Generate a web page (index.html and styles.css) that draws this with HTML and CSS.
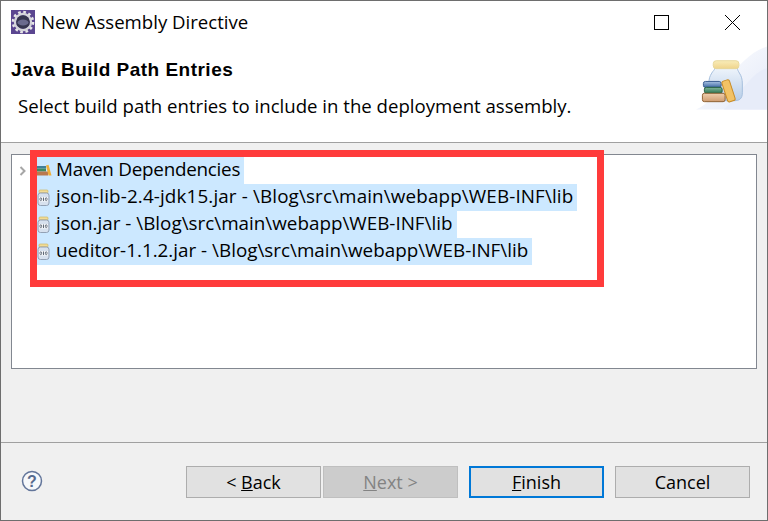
FILE: index.html
```html
<!DOCTYPE html>
<html lang="en">
<head>
<meta charset="utf-8">
<title>New Assembly Directive</title>
<link rel="stylesheet" href="styles.css">
</head>
<body>
<div class="window">
  <div class="top">
    <div class="titlebar">
      <svg class="app-icon" viewBox="0 0 24 24" aria-hidden="true">
        <rect width="24" height="24" fill="#5b4690"/>
        <circle cx="12" cy="12" r="9.800" fill="none" stroke="#e6e6e8" stroke-width="3" stroke-dasharray="2.600 2.530"/>
        <circle cx="12" cy="12" r="8" fill="none" stroke="#d4d4da" stroke-width="2.400"/>
        <circle cx="12" cy="12" r="6.800" fill="#35354f"/>
        <ellipse cx="12" cy="12.500" rx="5.500" ry="3" fill="#6a6a8e"/>
      </svg>
      <span class="title">New Assembly Directive</span>
      <span class="spacer"></span>
      <svg class="win-btn win-max" viewBox="0 0 15 15" aria-hidden="true"><rect x="0.5" y="0.5" width="14" height="14" fill="none" stroke="#000"/></svg>
      <svg class="win-btn win-close" viewBox="0 0 15 15" aria-hidden="true"><path d="M0 0L15 15M15 0L0 15" stroke="#000" fill="none"/></svg>
    </div>
    <div class="banner">
      <div class="banner-text">
        <h1 class="heading">Java Build Path Entries</h1>
        <p class="desc">Select build path entries to include in the deployment assembly.</p>
      </div>
      <svg class="banner-art" viewBox="0 0 72 64" aria-hidden="true">
        <defs>
          <linearGradient id="bg" x1="0" y1="0" x2="1" y2="1"><stop offset="0" stop-color="#ffffff"/><stop offset="1" stop-color="#e3e9f8"/></linearGradient>
          <linearGradient id="jar" x1="0" y1="0" x2="0" y2="1"><stop offset="0" stop-color="#eef4fb"/><stop offset="1" stop-color="#b7cde8"/></linearGradient>
          <linearGradient id="lid" x1="0" y1="0" x2="0" y2="1"><stop offset="0" stop-color="#f9ecb8"/><stop offset="1" stop-color="#efd48c"/></linearGradient>
          <linearGradient id="tan" x1="0" y1="0" x2="0" y2="1"><stop offset="0" stop-color="#efcfae"/><stop offset="1" stop-color="#cf9c70"/></linearGradient>
          <linearGradient id="blue" x1="0" y1="0" x2="0" y2="1"><stop offset="0" stop-color="#a9c2e2"/><stop offset="1" stop-color="#3f6aa5"/></linearGradient>
          <linearGradient id="green" x1="0" y1="0" x2="0" y2="1"><stop offset="0" stop-color="#84b79c"/><stop offset="1" stop-color="#2a7350"/></linearGradient>
        </defs>
        <path d="M0 64C24 54 40 10 72 0V64Z" fill="url(#bg)"/>
        <path d="M28 64C44 50 56 26 72 22V64Z" fill="#e7ecf9"/>
        <path d="M19 22h23c0 2 1 3 2 5 2 3 3 6 3 11v9c0 6-3 8-8 8H21c-5 0-8-2-8-8v-9c0-5 1-8 3-11 1-2 3-3 3-5z" fill="url(#jar)" stroke="#a5bedc"/>
        <rect x="17.500" y="14.500" width="26" height="8" rx="3" fill="url(#lid)" stroke="#e8d79a"/>
        <rect x="7.500" y="35.500" width="18" height="6" rx="2" fill="url(#blue)" stroke="#3a5c90"/>
        <rect x="8.500" y="41.500" width="18" height="6" rx="2" fill="url(#green)" stroke="#24603f"/>
        <rect x="6.500" y="47.500" width="23" height="8.500" rx="2" fill="url(#tan)" stroke="#8f6235"/>
        <rect x="-4" y="-11" width="8" height="22" rx="2" transform="translate(33 45) rotate(-18)" fill="#f2c265" stroke="#c98b24"/>
      </svg>
    </div>
  </div>
  <div class="body">
    <div class="tree">
      <div class="row">
        <svg class="chevron" viewBox="0 0 8 10" aria-hidden="true"><path d="M1.500 1l4 4-4 4" fill="none" stroke="#a6a6a6" stroke-width="2"/></svg>
        <span class="sel">
          <svg class="node-icon" viewBox="0 0 16 18" aria-hidden="true">
            <rect x="1" y="4" width="9" height="2.500" fill="#3f7f9a"/>
            <rect x="1" y="6.500" width="9" height="3" fill="#3f8a62"/>
            <rect x="0" y="9.500" width="12" height="4" fill="#b9794e"/>
            <path d="M10 3.500l2.500-.8 3 10.800h-3z" fill="#efae38"/>
          </svg>
          <span class="label label-tight">Maven Dependencies</span>
        </span>
      </div>
      <div class="row">
        <span class="chevron-gap"></span>
        <span class="sel">
          <svg class="node-icon" viewBox="0 0 16 18" aria-hidden="true">
            <rect x="3" y="1" width="9" height="3" rx="1" fill="#f2dc96" stroke="#cfb765" stroke-width=".7"/>
            <rect x="2" y="4" width="11" height="12.500" rx="2.500" fill="#d7e1ee" stroke="#8b99ad" stroke-width=".9"/>
            <path d="M3 8h9v4.500H3z" fill="#f6f8fb"/>
            <ellipse cx="4.800" cy="10.200" rx=".9" ry="1.500" fill="none" stroke="#505a68" stroke-width=".8"/>
            <path d="M7.500 8.500v3.500" fill="none" stroke="#505a68" stroke-width=".9"/>
            <ellipse cx="10.200" cy="10.200" rx=".9" ry="1.500" fill="none" stroke="#505a68" stroke-width=".8"/>
          </svg>
          <span class="label label-wide">json-lib-2.4-jdk15.jar - \Blog\src\main\webapp\WEB-INF\lib</span>
        </span>
      </div>
      <div class="row">
        <span class="chevron-gap"></span>
        <span class="sel">
          <svg class="node-icon" viewBox="0 0 16 18" aria-hidden="true">
            <rect x="3" y="1" width="9" height="3" rx="1" fill="#f2dc96" stroke="#cfb765" stroke-width=".7"/>
            <rect x="2" y="4" width="11" height="12.500" rx="2.500" fill="#d7e1ee" stroke="#8b99ad" stroke-width=".9"/>
            <path d="M3 8h9v4.500H3z" fill="#f6f8fb"/>
            <ellipse cx="4.800" cy="10.200" rx=".9" ry="1.500" fill="none" stroke="#505a68" stroke-width=".8"/>
            <path d="M7.500 8.500v3.500" fill="none" stroke="#505a68" stroke-width=".9"/>
            <ellipse cx="10.200" cy="10.200" rx=".9" ry="1.500" fill="none" stroke="#505a68" stroke-width=".8"/>
          </svg>
          <span class="label">json.jar - \Blog\src\main\webapp\WEB-INF\lib</span>
        </span>
      </div>
      <div class="row">
        <span class="chevron-gap"></span>
        <span class="sel">
          <svg class="node-icon" viewBox="0 0 16 18" aria-hidden="true">
            <rect x="3" y="1" width="9" height="3" rx="1" fill="#f2dc96" stroke="#cfb765" stroke-width=".7"/>
            <rect x="2" y="4" width="11" height="12.500" rx="2.500" fill="#d7e1ee" stroke="#8b99ad" stroke-width=".9"/>
            <path d="M3 8h9v4.500H3z" fill="#f6f8fb"/>
            <ellipse cx="4.800" cy="10.200" rx=".9" ry="1.500" fill="none" stroke="#505a68" stroke-width=".8"/>
            <path d="M7.500 8.500v3.500" fill="none" stroke="#505a68" stroke-width=".9"/>
            <ellipse cx="10.200" cy="10.200" rx=".9" ry="1.500" fill="none" stroke="#505a68" stroke-width=".8"/>
          </svg>
          <span class="label">ueditor-1.1.2.jar - \Blog\src\main\webapp\WEB-INF\lib</span>
        </span>
      </div>
    </div>
    <div class="callout"></div>
  </div>
  <div class="footer">
    <svg class="help" viewBox="0 0 22 22" aria-hidden="true">
      <circle cx="11" cy="11" r="9.500" fill="#f6f8fb" stroke="#62759a" stroke-width="1.500"/>
      <text x="11" y="16.500" text-anchor="middle" class="help-mark">?</text>
    </svg>
    <span class="spacer"></span>
    <div class="nav">
      <button class="btn" type="button">&lt; <u>B</u>ack</button>
      <button class="btn btn-disabled" type="button" disabled><u>N</u>ext &gt;</button>
    </div>
    <button class="btn btn-default" type="button"><u>F</u>inish</button>
    <button class="btn" type="button">Cancel</button>
  </div>
</div>
</body>
</html>
```

FILE: styles.css
```css
* { box-sizing: border-box; }
html, body { margin: 0; padding: 0; }
body {
  width: 768px;
  height: 521px;
  overflow: hidden;
  font-family: "Open Sans", "Noto Sans", sans-serif;
  color: #000;
}
.window {
  position: relative;
  width: 768px;
  height: 521px;
  display: flex;
  flex-direction: column;
  background: #f0f0f0;
  border: 1px solid #6e6e6e;
}
.top {
  height: 142px;
  flex: none;
  background: #fff;
  border-bottom: 1px solid #a0a0a0;
  display: flex;
  flex-direction: column;
}
.titlebar {
  height: 42px;
  flex: none;
  display: flex;
  align-items: center;
  padding: 0 27px 0 10px;
}
.app-icon { width: 24px; height: 24px; margin-right: 6px; }
.title { font-size: 18.6px; line-height: 24px; }
.spacer { flex: 1; }
.win-btn { width: 15px; height: 15px; display: block; }
.win-max { margin-right: 56px; }
.banner { flex: 1; display: flex; align-items: flex-start; justify-content: space-between; }
.banner-text { padding-left: 10px; }
.heading {
  margin: 15px 0 0;
  font-family: "Liberation Sans", sans-serif;
  font-size: 19px;
  line-height: 24px;
  font-weight: 700;
  letter-spacing: 0.48px;
}
.desc { margin: 12px 0 0 7px; font-size: 18.6px; line-height: 24px; }
.banner-art { width: 71px; height: 64px; display: block; flex: none; margin-top: 3px; }
.body { flex: 1; position: relative; padding: 11px 10px 0 10px; }
.tree {
  height: 215px;
  background: #fff;
  border: 1px solid #828790;
  padding-top: 2px;
}
.row { height: 27px; display: flex; align-items: center; padding-left: 7px; }
.chevron { width: 8px; height: 10px; margin-right: 9px; flex: none; }
.chevron-gap { width: 17px; flex: none; }
.sel { display: flex; align-items: center; height: 27px; background: #cce8ff; padding-right: 4px; }
.node-icon { width: 16px; height: 18px; margin-right: 4px; flex: none; }
.label { font-size: 18.83px; line-height: 25px; align-self: flex-start; white-space: nowrap; }
.label-tight { letter-spacing: -0.25px; }
.label-wide { letter-spacing: 0.13px; }
.callout {
  position: absolute;
  left: 29px;
  top: 7px;
  width: 574px;
  height: 137px;
  border: 7px solid #ff3b3b;
}
.footer {
  height: 78px;
  flex: none;
  border-top: 1px solid #a0a0a0;
  display: flex;
  align-items: flex-start;
  padding: 23px 17px 0 20px;
  gap: 11px;
}
.help { width: 22px; height: 22px; margin-top: 4px; }
.help-mark { font-family: "Liberation Sans", sans-serif; font-size: 16px; font-weight: 700; fill: #566a8e; }
.nav { display: flex; gap: 2px; }
.btn {
  width: 135px;
  height: 32px;
  padding: 0;
  background: #e1e1e1;
  border: 1px solid #adadad;
  border-radius: 0;
  font-family: inherit;
  font-size: 18px;
  color: #000;
}
.btn-disabled { background: #cccccc; border-color: #bfbfbf; color: #838383; }
.btn-default { border: 2px solid #0078d7; }
```
